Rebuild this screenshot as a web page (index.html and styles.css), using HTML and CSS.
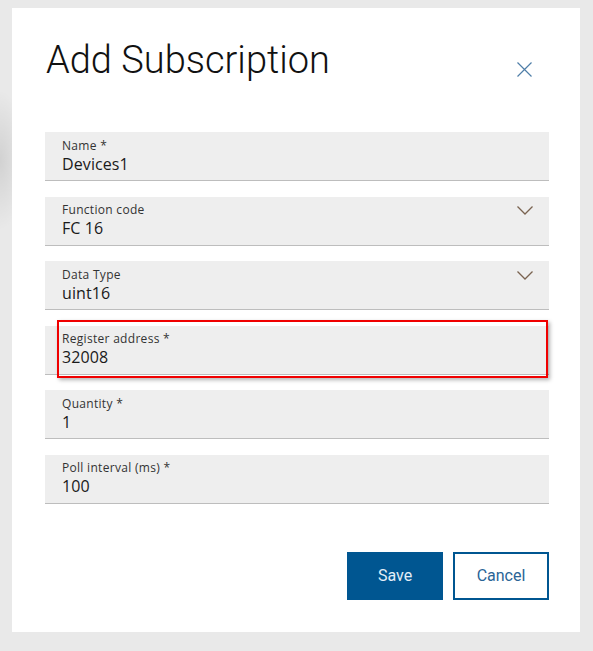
FILE: index.html
```html
<!DOCTYPE html>
<html>
<head>
<meta charset="utf-8">
<link rel="stylesheet" href="styles.css">
</head>
<body>
<div class="dialog">
  <div class="header">
    <h1 class="title">Add Subscription</h1>
    <svg class="close" width="15" height="15" viewBox="0 0 15 15"><path d="M0.5 0.5 L14.5 14.5 M14.5 0.5 L0.5 14.5" stroke="#4f7ea8" stroke-width="1.2" fill="none"/></svg>
  </div>
  <div class="fields">
    <div class="field">
      <div class="label">Name *</div>
      <div class="value">Devices1</div>
    </div>
    <div class="field">
      <div class="label">Function code</div>
      <div class="value">FC 16</div>
      <svg class="chevron" width="16" height="9" viewBox="0 0 16 9"><path d="M0.5 0.5 L8 8 L15.5 0.5" stroke="#7a6350" stroke-width="1.3" fill="none"/></svg>
    </div>
    <div class="field">
      <div class="label">Data Type</div>
      <div class="value">uint16</div>
      <svg class="chevron" width="16" height="9" viewBox="0 0 16 9"><path d="M0.5 0.5 L8 8 L15.5 0.5" stroke="#7a6350" stroke-width="1.3" fill="none"/></svg>
    </div>
    <div class="field">
      <div class="label">Register address *</div>
      <div class="value">32008</div>
      <div class="highlight"></div>
    </div>
    <div class="field">
      <div class="label">Quantity *</div>
      <div class="value">1</div>
    </div>
    <div class="field">
      <div class="label">Poll interval (ms) *</div>
      <div class="value">100</div>
    </div>
  </div>
  <div class="actions">
    <button class="btn btn-primary">Save</button>
    <button class="btn btn-secondary">Cancel</button>
  </div>
</div>
</body>
</html>
```

FILE: styles.css
```css
html, body {
  margin: 0;
  padding: 0;
}
body {
  width: 593px;
  height: 651px;
  overflow: hidden;
  background:
    radial-gradient(ellipse 26px 70px at 0 160px, rgba(0,0,0,0.1), rgba(0,0,0,0)),
    #e9e9e9;
  font-family: Roboto, "Liberation Sans", sans-serif;
  color: #1a1a1a;
}
.dialog {
  margin: 8px 0 0 12px;
  width: 568px;
  height: 624px;
  box-sizing: border-box;
  background: #ffffff;
  padding: 29px 31px 0 33px;
  display: flex;
  flex-direction: column;
}
.header {
  display: flex;
  justify-content: space-between;
  align-items: flex-start;
  padding-left: 1px;
}
.title {
  margin: 0;
  font-size: 38px;
  line-height: 46px;
  font-weight: 300;
  color: #111;
}
.close {
  margin-top: 25px;
  margin-right: 17px;
  display: block;
}
.fields {
  margin-top: 49px;
  display: flex;
  flex-direction: column;
  gap: 15.6px;
}
.field {
  position: relative;
  background: #eeeeee;
  border-bottom: 1px solid #bdbdbd;
  padding: 5.5px 16px 6.5px 17px;
  font-family: "Open Sans", Roboto, sans-serif;
}
.label {
  font-size: 12px;
  line-height: 16px;
  color: #333;
  letter-spacing: 0.3px;
}
.value {
  font-size: 16px;
  line-height: 20px;
  color: #1a1a1a;
  letter-spacing: 0.1px;
}
.chevron {
  position: absolute;
  right: 16px;
  top: 9.5px;
  display: block;
}
.highlight {
  position: absolute;
  left: 12px;
  top: -6px;
  width: 491px;
  height: 58px;
  box-sizing: border-box;
  border: 2px solid #f00000;
  box-shadow: 2px 2px 4px rgba(0,0,0,0.3);
}
.actions {
  margin-top: 48px;
  display: flex;
  justify-content: flex-end;
  gap: 10px;
}
.btn {
  width: 96px;
  height: 48px;
  box-sizing: border-box;
  font-family: Roboto, "Liberation Sans", sans-serif;
  font-size: 16px;
  cursor: pointer;
  padding: 0;
}
.btn-primary {
  background: #005691;
  border: none;
  color: #e3eef8;
}
.btn-secondary {
  background: #ffffff;
  border: 2px solid #005691;
  color: #2a6496;
}
```
